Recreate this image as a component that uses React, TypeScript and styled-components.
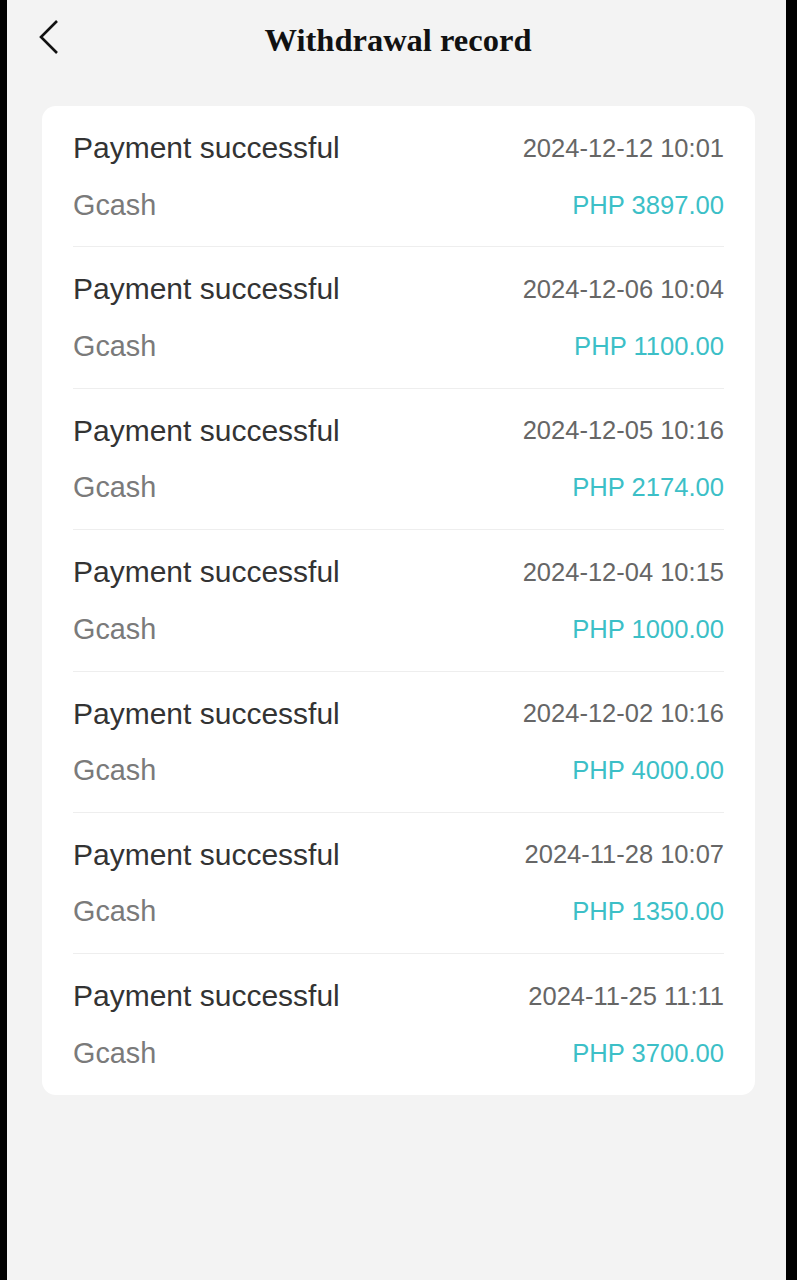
import React, { FC } from "react";
import styled, { createGlobalStyle } from "styled-components";

const GlobalStyle = createGlobalStyle`
  html, body {
    margin: 0;
    padding: 0;
    background: #000;
  }
  * {
    box-sizing: border-box;
  }
`;

type RecordType = {
  status: string;
  date: string;
  method: string;
  amount: string;
};

const records: RecordType[] = [
  { status: "Payment successful", date: "2024-12-12 10:01", method: "Gcash", amount: "PHP 3897.00" },
  { status: "Payment successful", date: "2024-12-06 10:04", method: "Gcash", amount: "PHP 1100.00" },
  { status: "Payment successful", date: "2024-12-05 10:16", method: "Gcash", amount: "PHP 2174.00" },
  { status: "Payment successful", date: "2024-12-04 10:15", method: "Gcash", amount: "PHP 1000.00" },
  { status: "Payment successful", date: "2024-12-02 10:16", method: "Gcash", amount: "PHP 4000.00" },
  { status: "Payment successful", date: "2024-11-28 10:07", method: "Gcash", amount: "PHP 1350.00" },
  { status: "Payment successful", date: "2024-11-25 11:11", method: "Gcash", amount: "PHP 3700.00" },
];

const Page = styled.div`
  margin-left: 7px;
  width: 779px;
  min-height: 1280px;
  background: #f3f3f3;
  font-family: "Liberation Sans", Arial, sans-serif;
  overflow: hidden;
`;

const Header = styled.div`
  height: 80px;
  display: grid;
  grid-template-columns: 1fr auto 1fr;
  align-items: center;
`;

const BackButton = styled.button`
  justify-self: start;
  margin-left: 31px;
  margin-top: -6px;
  padding: 0;
  border: none;
  background: none;
  display: flex;
  cursor: pointer;
`;

const Title = styled.h1`
  margin: 0 0 0 3px;
  font-family: "Liberation Serif", "Times New Roman", serif;
  font-weight: 700;
  font-size: 32.5px;
  color: #111;
  letter-spacing: 0;
`;

const Card = styled.div`
  margin: 26px 31px 0 35px;
  background: #fff;
  border-radius: 14px;
  padding: 0 31px;
`;

const Row = styled.div`
  padding: 24px 0 23.4px;
  border-bottom: 1px solid #eeeeee;
  display: flex;
  flex-direction: column;
  gap: 21px;

  &:last-child {
    border-bottom: none;
  }
`;

const Line = styled.div`
  display: flex;
  justify-content: space-between;
  align-items: center;
  height: 36px;
`;

const Status = styled.span`
  font-size: 30px;
  color: #333;
`;

const DateText = styled.span`
  font-size: 25.5px;
  color: #666;
`;

const Method = styled.span`
  font-size: 28.8px;
  color: #7a7a7a;
`;

const Amount = styled.span`
  font-size: 25.6px;
  color: #3cbfc7;
`;

const RecordRow: FC<RecordType> = ({ status, date, method, amount }) => (
  <Row>
    <Line>
      <Status>{status}</Status>
      <DateText>{date}</DateText>
    </Line>
    <Line>
      <Method>{method}</Method>
      <Amount>{amount}</Amount>
    </Line>
  </Row>
);

const App: FC = () => {
  return (
    <>
      <GlobalStyle />
      <Page>
        <Header>
          <BackButton aria-label="back">
            <svg width="24" height="38" viewBox="0 0 24 38">
              <path d="M19 3 L3 19 L19 35" fill="none" stroke="#111" strokeWidth="2.6" />
            </svg>
          </BackButton>
          <Title>Withdrawal record</Title>
          <span />
        </Header>
        <Card>
          {records.map((r, i) => (
            <RecordRow key={i} {...r} />
          ))}
        </Card>
      </Page>
    </>
  );
};

export default App;
